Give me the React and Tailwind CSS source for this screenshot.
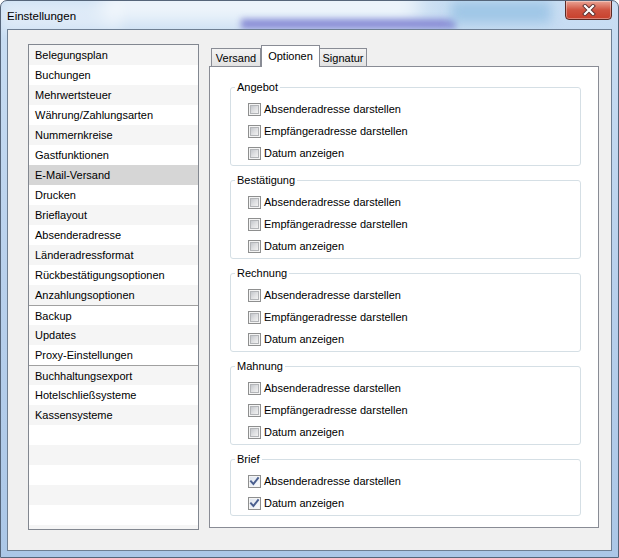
import React from "react";

const listItems = [
  "Belegungsplan",
  "Buchungen",
  "Mehrwertsteuer",
  "Währung/Zahlungsarten",
  "Nummernkreise",
  "Gastfunktionen",
  "E-Mail-Versand",
  "Drucken",
  "Brieflayout",
  "Absenderadresse",
  "Länderadressformat",
  "Rückbestätigungsoptionen",
  "Anzahlungsoptionen",
  "Backup",
  "Updates",
  "Proxy-Einstellungen",
  "Buchhaltungsexport",
  "Hotelschließsysteme",
  "Kassensysteme",
];

const groups = [
  { title: "Angebot", items: [["Absenderadresse darstellen", false], ["Empfängeradresse darstellen", false], ["Datum anzeigen", false]] },
  { title: "Bestätigung", items: [["Absenderadresse darstellen", false], ["Empfängeradresse darstellen", false], ["Datum anzeigen", false]] },
  { title: "Rechnung", items: [["Absenderadresse darstellen", false], ["Empfängeradresse darstellen", false], ["Datum anzeigen", false]] },
  { title: "Mahnung", items: [["Absenderadresse darstellen", false], ["Empfängeradresse darstellen", false], ["Datum anzeigen", false]] },
  { title: "Brief", items: [["Absenderadresse darstellen", true], ["Datum anzeigen", true]] },
];

function CheckBox({ checked }) {
  return (
    <div className="w-[13px] h-[13px] shrink-0 border border-[#8e8f8f] bg-[#f4f4f4] p-[1px]">
      {checked ? (
        <div className="w-full h-full bg-gradient-to-br from-[#dfe5ee] to-[#f8fafd] relative">
          <svg width="11" height="11" viewBox="0 0 11 11" className="absolute -left-[1px] -top-[1px]">
            <path d="M2 5.4 L4.4 8 L9 2.2" fill="none" stroke="#4a5f8f" strokeWidth="2" strokeLinecap="square" />
          </svg>
        </div>
      ) : (
        <div className="w-full h-full bg-gradient-to-br from-[#c4c7cc] via-[#dedfe1] to-[#f2f2f2] border border-[#b3b5b8]" />
      )}
    </div>
  );
}

function Group({ title, items }) {
  return (
    <div className="relative w-[351px] border border-[#d5dfe5] rounded-[3px] pt-[10px] pb-[1px] pl-[17px]">
      <span className="absolute left-[4px] -top-[8px] px-[2px] bg-white leading-[14px]">{title}</span>
      {items.map(([label, checked], i) => (
        <div key={i} className="h-[22px] flex items-center gap-[3px]">
          <CheckBox checked={checked} />
          <span className="leading-[14px]">{label}</span>
        </div>
      ))}
    </div>
  );
}

export default function App() {
  const rows = Array.from({ length: 25 }, (_, i) => listItems[i] ?? "");
  return (
    <div className="w-[619px] h-[558px] relative overflow-hidden rounded-t-[7px] border border-[#55657a] bg-gradient-to-b from-[#c9def3] via-[#b8d0ec] to-[#abc7e7] font-['Liberation_Sans',Arial,sans-serif] text-[11px] text-black">
      {/* glass decoration */}
      <div className="absolute left-[100px] -top-[12px] w-[320px] h-[34px] rounded-full bg-white/70 blur-[10px]" />
      <div className="absolute left-[240px] top-[18px] w-[215px] h-[10px] bg-[#8a8ed6] blur-[3px]" />
      <div className="absolute left-[450px] top-[0px] w-[100px] h-[22px] bg-[#9fc6e6] blur-[6px]" />
      <div className="absolute left-0 top-0 w-[120px] h-[30px] bg-white/40 blur-[6px]" />

      {/* title bar */}
      <div className="relative h-[28px] flex items-center pl-[6px] text-[11.5px] leading-[14px] pt-[1px]">Einstellungen</div>

      {/* close button */}
      <div className="absolute left-[564px] -top-[1px] w-[47px] h-[20px] rounded-b-[4px] border border-[#5c2a24] bg-gradient-to-b from-[#e9a496] via-[#cf5340] to-[#c8402c] flex items-center justify-center shadow-[inset_0_0_0_1px_rgba(255,255,255,0.35)]">
        <svg width="14" height="12" viewBox="0 0 14 12">
          <path d="M3 2 L11 10 M11 2 L3 10" stroke="#5a3030" strokeWidth="4" strokeLinecap="square" />
          <path d="M3 2 L11 10 M11 2 L3 10" stroke="#ffffff" strokeWidth="2.2" strokeLinecap="square" />
        </svg>
      </div>

      {/* client area */}
      <div className="relative ml-[6px] w-[605px] h-[522px] border border-[#6e7f93] bg-[#f0f0f0] flex pl-[20px] pt-[14px] gap-[10px]">
        {/* list */}
        <div className="w-[171px] h-[486px] border border-[#828790] bg-white overflow-hidden">
          {rows.map((t, i) => {
            const selected = i === 6;
            const sep = i === 13 || i === 16;
            const bg = selected ? "bg-[#d6d6d6]" : i % 2 === 0 ? "bg-[#f5f5f5]" : "bg-white";
            return (
              <div
                key={i}
                className={`h-[20px] flex items-center pl-[6px] ${bg} ${sep ? "border-t border-[#a0a0a0]" : ""}`}
              >
                <span className="leading-[14px]">{t}</span>
              </div>
            );
          })}
        </div>

        {/* tab control */}
        <div className="flex flex-col">
          <div className="h-[22px] flex items-end pl-[2px] relative z-10">
            <div className="w-[50px] h-[18px] border border-b-0 border-[#898c95] bg-gradient-to-b from-[#f3f3f3] to-[#e2e2e2] flex items-center justify-center leading-[14px]">
              Versand
            </div>
            <div className="w-[59px] h-[22px] -mb-[1px] border border-b-0 border-[#898c95] bg-white flex items-center justify-center leading-[14px] pb-[1px]">
              Optionen
            </div>
            <div className="-ml-[1px] w-[48px] h-[18px] border border-b-0 border-[#898c95] bg-gradient-to-b from-[#f3f3f3] to-[#e2e2e2] flex items-center justify-center leading-[14px]">
              Signatur
            </div>
          </div>
          <div className="w-[390px] h-[462px] border border-[#898c95] bg-white pt-[20px] pl-[20px] flex flex-col gap-[14px]">
            {groups.map((g) => (
              <Group key={g.title} title={g.title} items={g.items} />
            ))}
          </div>
        </div>
      </div>
    </div>
  );
}
